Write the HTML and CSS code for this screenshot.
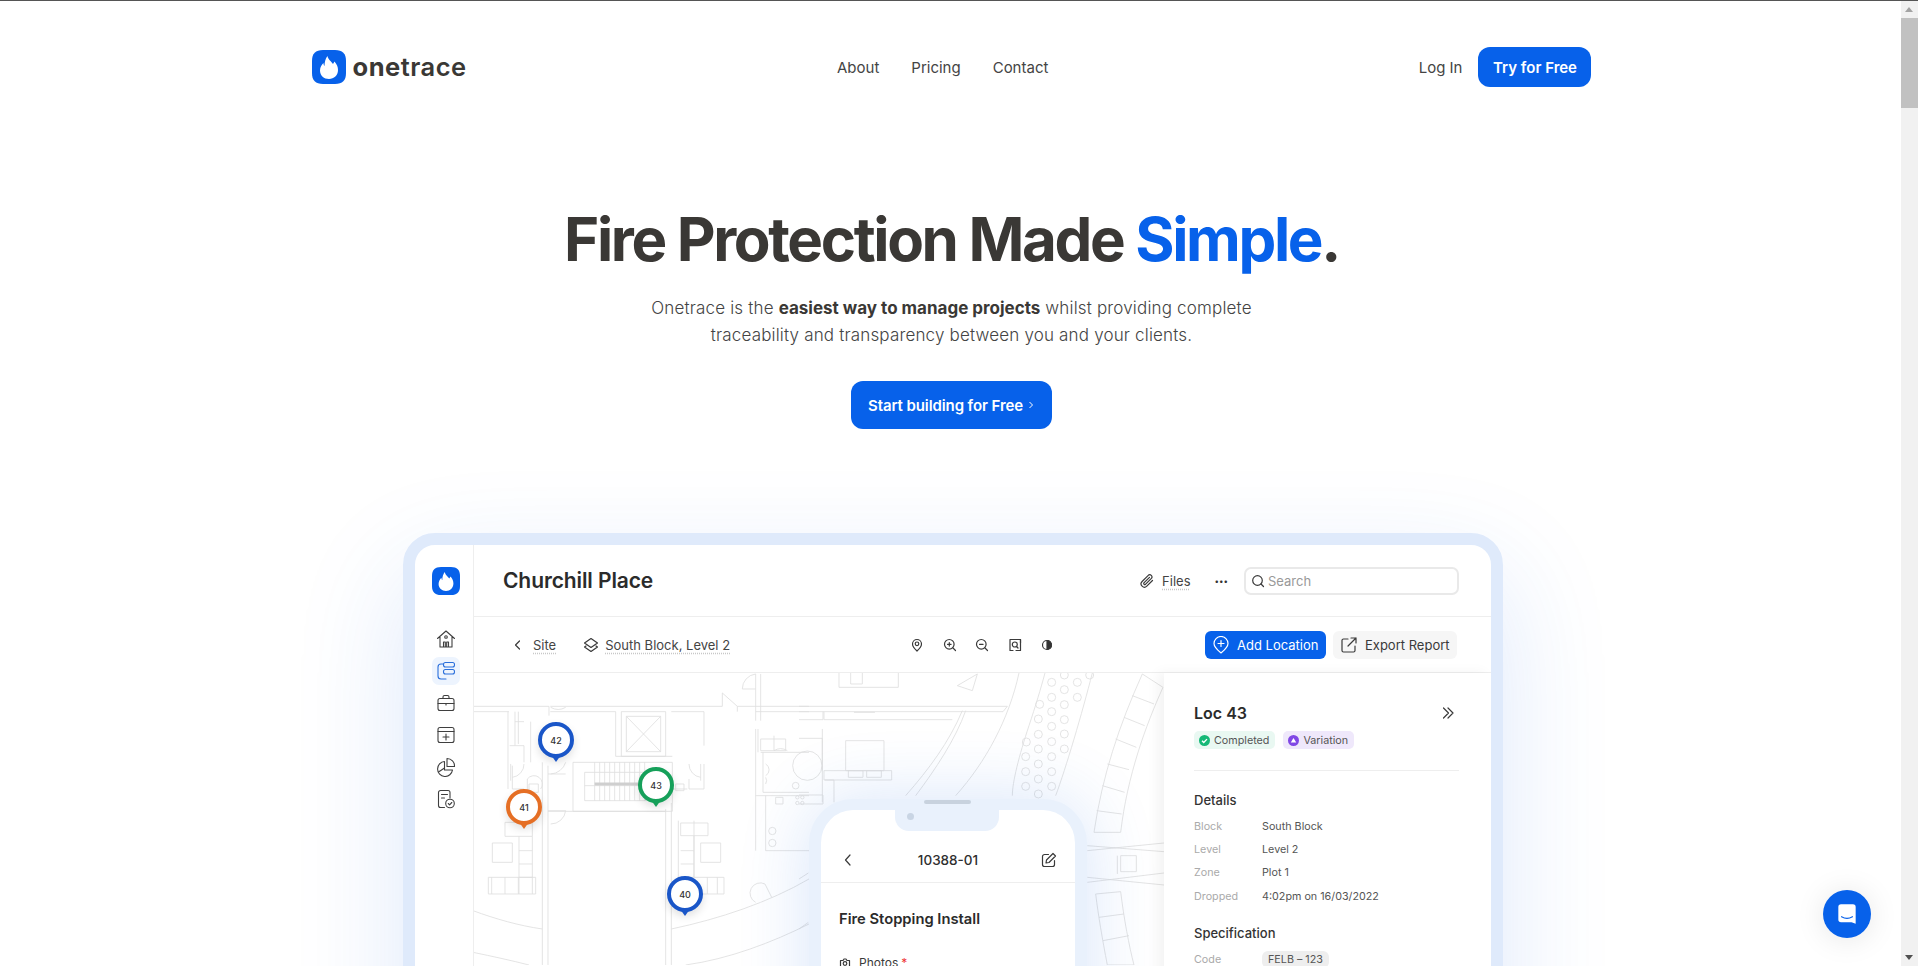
FILE: index.html
```html
<!DOCTYPE html>
<html lang="en">
<head>
<meta charset="utf-8">
<title>Onetrace</title>
<link rel="stylesheet" href="styles.css">
</head>
<body>
<main class="page">
  <header class="site-header">
    <a class="brand">
      <svg class="brand-mark" viewBox="0 0 34 34"><path d="M11 0h12c7.500 0 11 3.500 11 11v12c0 7.500-3.500 11-11 11H11C3.500 34 0 30.500 0 23V11C0 3.500 3.500 0 11 0z" fill="#0761ea"/><path d="M15.500 6c.5 3.500 3.500 5 5.500 8l1.500-2.500c2.500 3 3.500 5.500 3.500 8.500 0 5.500-4 9-9 9s-9-3.500-9-8.500c0-3.500 2-6 3.500-7.500 0 1.500.5 2.500 1 3 0-4 1-7.500 3-10z" fill="#fff"/></svg>
      <span class="wordmark"><b>one</b>trace</span>
    </a>
    <nav class="site-nav"><a>About</a><a>Pricing</a><a>Contact</a></nav>
    <div class="site-actions"><a>Log In</a><a class="btn-primary btn-small">Try for Free</a></div>
  </header>

  <section class="hero">
    <h1>Fire Protection Made <span>Simple</span>.</h1>
    <p>Onetrace is the <strong>easiest way to manage projects</strong> whilst providing complete<br>traceability and transparency between you and your clients.</p>
    <a class="btn-primary btn-large">Start building for Free <svg class="cta-chevron" viewBox="0 0 8 10"><path d="M2.500 2l3 3-3 3" fill="none" stroke="#fff" stroke-width="1"/></svg></a>
  </section>

  <section class="device">
    <aside class="rail">
      <svg class="rail-logo" viewBox="0 0 34 34"><path d="M11 0h12c7.500 0 11 3.500 11 11v12c0 7.500-3.500 11-11 11H11C3.500 34 0 30.500 0 23V11C0 3.500 3.500 0 11 0z" fill="#0761ea"/><path d="M15.500 6c.5 3.500 3.500 5 5.500 8l1.500-2.500c2.500 3 3.500 5.500 3.500 8.500 0 5.500-4 9-9 9s-9-3.500-9-8.500c0-3.500 2-6 3.500-7.500 0 1.500.5 2.500 1 3 0-4 1-7.500 3-10z" fill="#fff"/></svg>
      <div class="rail-icons">
        <span class="rail-icon"><svg viewBox="0 0 20 20"><path d="M1.500 9.500L10 2l8.500 7.500M4 8v10h12V8M7.500 18v-5h1.800v5M10.700 18v-5h1.800v5"/><circle cx="10" cy="8" r="1.300"/></svg></span>
        <span class="rail-icon is-active"><svg viewBox="0 0 20 20"><path d="M7.500 3H5A3 3 0 0 0 2 6v9a3 3 0 0 0 3 3h5"/><rect x="7.500" y="1.500" width="11" height="4.500" rx="2"/><rect x="7.500" y="8.500" width="11" height="4.500" rx="2"/></svg></span>
        <span class="rail-icon"><svg viewBox="0 0 20 20"><rect x="2" y="5.500" width="16" height="12" rx="2"/><path d="M7 5.500V4a1.500 1.500 0 0 1 1.500-1.500h3A1.500 1.500 0 0 1 13 4v1.500M2 10.500h16M10 10.500v1.500"/></svg></span>
        <span class="rail-icon"><svg viewBox="0 0 20 20"><rect x="2" y="2.500" width="16" height="15" rx="2"/><path d="M2 6.500h16M10 9v6M7 12h6"/></svg></span>
        <span class="rail-icon"><svg viewBox="0 0 20 20"><path d="M8.500 4.500A7.500 7.500 0 1 0 16.500 13H8.500z"/><path d="M11 1.500a7.500 7.500 0 0 1 7.500 8H11zM2.500 15L8.500 11"/></svg></span>
        <span class="rail-icon"><svg viewBox="0 0 20 20"><path d="M8.500 18.500H4.500a2 2 0 0 1-2-2V3.500a2 2 0 0 1 2-2H12a2 2 0 0 1 2 2V9M5.500 5.500h6M5.500 9h3"/><circle cx="14" cy="14.500" r="4.300"/><path d="M12.300 14.500l1.300 1.300 2.200-2.300"/></svg></span>
      </div>
    </aside>
    <div class="app">
      <div class="appbar">
        <h2>Churchill Place</h2>
        <div class="appbar-tools">
          <span class="tool-link"><svg class="icon-16" viewBox="0 0 16 16"><path d="M13.500 7.500l-5.700 5.700a3.300 3.300 0 0 1-4.700-4.700L9.300 2.300a2.200 2.200 0 0 1 3.100 3.100l-6 6a1.100 1.100 0 0 1-1.500-1.500L10.500 4.300"/></svg><u>Files</u></span>
          <span class="dots">•••</span>
          <label class="search"><svg class="icon-14" viewBox="0 0 14 14"><circle cx="6.500" cy="6.500" r="4.800"/><path d="M10 10l2.500 2.500"/></svg>Search</label>
        </div>
      </div>
      <div class="toolbar">
        <div class="crumbs">
          <svg class="icon-12" viewBox="0 0 12 12"><path d="M7.500 2L3.500 6l4 4"/></svg><u class="crumb-site">Site</u>
          <svg class="icon-16 crumb-layers" viewBox="0 0 16 16"><path d="M8 1.500L14.500 6 8 10.500 1.500 6z"/><path d="M3 9L1.500 10 8 14.500 14.500 10 13 9"/></svg><u>South Block, Level 2</u>
        </div>
        <div class="map-tools">
          <svg class="icon-14" viewBox="0 0 14 14"><path d="M7 13c-2.500-2.300-4.500-4.500-4.500-7a4.500 4.500 0 0 1 9 0c0 2.500-2 4.700-4.500 7z"/><circle cx="7" cy="5.800" r="1.800"/></svg>
          <svg class="icon-14" viewBox="0 0 14 14"><circle cx="6.300" cy="6.300" r="4.800"/><path d="M10 10l2.500 2.500M4.500 6.300h3.600M6.300 4.500v3.600"/></svg>
          <svg class="icon-14" viewBox="0 0 14 14"><circle cx="6.300" cy="6.300" r="4.800"/><path d="M10 10l2.500 2.500M4.500 6.300h3.600"/></svg>
          <svg class="icon-14" viewBox="0 0 14 14"><path d="M5 12.500H2V1.500h10.500V5"/><path d="M9 1.500h3.500v11H8"/><circle cx="6.800" cy="6.500" r="2.500"/><path d="M8.500 8.500l1.500 1.500"/></svg>
          <svg class="icon-14" viewBox="0 0 14 14"><circle cx="7" cy="7" r="4.500"/><path d="M7 2.500a4.500 4.500 0 0 1 0 9z" fill="#333"/></svg>
        </div>
        <div class="toolbar-actions">
          <a class="btn-add"><svg class="icon-18" viewBox="0 0 18 18"><path d="M9 17c-3.500-3-7-5.800-7-9.500a7 7 0 0 1 14 0c0 3.700-3.500 6.500-7 9.500zM9 4.500v6M6 7.500h6"/></svg>Add Location</a>
          <a class="btn-export"><svg class="icon-18" viewBox="0 0 18 18"><path d="M8 3H3.500A1.500 1.500 0 0 0 2 4.500v10A1.500 1.500 0 0 0 3.500 16h10a1.500 1.500 0 0 0 1.500-1.500V10M11 2h5v5M16 2L8 10"/></svg>Export Report</a>
        </div>
      </div>
      <div class="workspace">
        <div class="map">
          <svg class="plan" viewBox="475 674 690 292" aria-hidden="true">
            <g transform="translate(410 620) scale(.33333)">
              <path d="M192 262H420M192 278H300M420 262V290M424 262H940V222M424 278H620V412M637 278H770V412H637zM652 292H755V398H652zM652 292L755 398M755 292L652 398M620 412H790M787 278H885V380M940 222L985 262V278M985 262H1200M1040 278H1200M1040 165V305M1055 165V305M1000 210H1040M1000 210A45 45 0 0 1 1040 165M297 278V510M318 278V380M328 278V375M302 380H345V430M345 308H318M365 308V430M400 430V1038M417 440V1038M770 570V1038M787 552V1038M492 430H790V577H492zM527 460H710V545H527zM417 577H770M417 465H470M470 430A50 50 0 0 1 425 465M417 575H470M425 615A45 45 0 0 0 470 575M425 265A45 45 0 0 0 470 265"/>
              <path d="M557 430V545M572 430V545M587 430V545M602 430V545M617 430V545M632 430V545M647 430V545M662 430V545M677 430V545M692 430V545M707 430V545M527 500H690"/>
              <path d="M557 495H690" class="plan-bar"/>
              <path d="M288 610H370V652H288zM250 672H310V730H250zM330 652V825M370 652V825M330 695H370M330 735H370M330 775H370M238 775H380V825H238zM248 775V825M288 775V825M328 775V825"/>
              <path d="M808 605V825M855 605V775M815 612H897V650H815zM875 672H935V730H875zM855 650V775M815 695H855M815 735H855M815 775H945V825H815zM895 775V825M925 775V825"/>
              <path d="M310 440V510M305 435V485M310 510H345M345 435A40 40 0 0 1 310 475M355 510V480A20 20 0 0 1 395 510M360 495H388V520H360z"/>
              <path d="M885 435V510M875 435V485M840 510H885M840 435A40 40 0 0 0 875 475M790 510H835M800 495H825V515H800zM840 510V480"/>
              <path d="M192 875C260 900 330 920 400 930M192 1000C250 1012 310 1025 360 1038M787 930C930 900 1080 850 1200 780M830 1038C960 1020 1090 970 1200 915M1040 850A25 25 0 0 1 1068 795L1088 835"/>
              <path d="M1040 330V695M1047 330V400M1055 360H1130V395H1055zM1095 350V395A38 38 0 0 1 1135 395M1055 400H1200M1062 400V520H1200M1040 530H1200M1070 530V695H1200"/>
              <path d="M1100 535H1122V555H1100z"/>
              <circle cx="1090" cy="636" r="11"/><circle cx="1090" cy="672" r="11"/><circle cx="1160" cy="500" r="10"/><circle cx="1195" cy="440" r="44"/><circle cx="1165" cy="535" r="5"/><circle cx="1180" cy="535" r="5"/><circle cx="1165" cy="552" r="5"/><circle cx="1180" cy="552" r="5"/>
              <path d="M1070 435A20 20 0 0 1 1070 470M1070 475A20 20 0 0 1 1070 495"/>
            </g>
            <g transform="translate(800 670) scale(.33333)">
              <path d="M120 10V55H298V10M155 10V45H190V10M0 112H625L612 128H0M75 128V152H460M0 152H72V128M165 130H228"/>
              <path d="M140 215H255V305H140zM75 305H278V333H75zM148 305H192V325H148zM203 305H247V325H203zM0 208H70V305M70 180V400M0 378H72V405H0M78 333H105V400"/>
              <path d="M320 380C390 300 450 220 490 125M350 380C410 300 470 210 500 125M470 380C560 280 630 150 660 12M475 50L535 15L520 65zM640 380C640 340 660 260 690 170C710 110 725 60 738 12M770 380C800 300 850 130 880 12"/>
              <circle cx="680" cy="352" r="12"/><circle cx="680" cy="308" r="12"/><circle cx="680" cy="263" r="12"/><circle cx="682" cy="219" r="12"/><circle cx="718" cy="375" r="12"/><circle cx="718" cy="330" r="12"/><circle cx="718" cy="285" r="12"/><circle cx="718" cy="240" r="12"/><circle cx="718" cy="196" r="12"/><circle cx="718" cy="150" r="12"/><circle cx="722" cy="106" r="12"/><circle cx="758" cy="352" r="12"/><circle cx="758" cy="308" r="12"/><circle cx="758" cy="263" r="12"/><circle cx="758" cy="218" r="12"/><circle cx="758" cy="172" r="12"/><circle cx="758" cy="128" r="12"/><circle cx="758" cy="85" r="12"/><circle cx="758" cy="40" r="12"/><circle cx="796" cy="240" r="12"/><circle cx="796" cy="195" r="12"/><circle cx="796" cy="152" r="12"/><circle cx="796" cy="107" r="12"/><circle cx="796" cy="62" r="12"/><circle cx="796" cy="18" r="12"/><circle cx="835" cy="85" r="12"/><circle cx="835" cy="40" r="12"/><circle cx="872" cy="18" r="12"/>
              <path d="M1030 15C960 170 910 320 885 490H965C985 320 1040 170 1092 55zM1000 80L1065 105M975 145L1037 170M950 210L1012 235M925 285L990 302M910 350L977 370M893 425L968 435"/>
              <path d="M865 530L1095 548M865 545L1095 522M865 640L1095 612M865 625L1095 648M955 560V615M965 560H1012V608H965z"/>
              <path d="M890 675L965 668C975 750 990 830 1005 888H925C910 810 898 740 890 675zM900 745L975 735M912 815L990 800"/>
              <path d="M0 630L28 612M0 780L28 760"/>
            </g>
          </svg>
          <span class="pin pin-blue pin-42">42</span>
          <span class="pin pin-green pin-43">43</span>
          <span class="pin pin-orange pin-41">41</span>
          <span class="pin pin-blue pin-40">40</span>
          <div class="phone">
            <div class="phone-notch"><i class="phone-speaker"></i><i class="phone-camera"></i></div>
            <div class="phone-head">
              <svg class="icon-14" viewBox="0 0 14 14"><path d="M9 2L4.500 7 9 12"/></svg>
              <span>10388-01</span>
              <svg class="icon-16" viewBox="0 0 16 16"><path d="M7.500 2.500H3.500A2 2 0 0 0 1.500 4.500v8a2 2 0 0 0 2 2h8a2 2 0 0 0 2-2V8.500M12 1.500l2.500 2.500L8 10.500l-3 .5.500-3z"/></svg>
            </div>
            <div class="phone-body">
              <h3>Fire Stopping Install</h3>
              <div class="phone-field"><svg class="icon-12" viewBox="0 0 12 12"><path d="M1.500 3.500H4L5 2h2l1 1.500h2.500v7h-9z"/><circle cx="6" cy="6.500" r="1.800"/></svg>Photos <em>*</em></div>
            </div>
          </div>
        </div>
        <aside class="panel">
          <div class="panel-head">
            <strong>Loc 43</strong>
            <svg class="icon-14" viewBox="0 0 14 14"><path d="M2.500 2L7.500 7l-5 5M7 2l5 5-5 5"/></svg>
          </div>
          <div class="chips">
            <span class="chip chip-green"><svg viewBox="0 0 12 12"><circle cx="6" cy="6" r="6" fill="#16b877"/><path d="M3.300 6.200l1.900 1.900 3.500-3.600" fill="none" stroke="#fff" stroke-width="1.500"/></svg>Completed</span>
            <span class="chip chip-purple"><svg viewBox="0 0 12 12"><circle cx="6" cy="6" r="6" fill="#8047e5"/><path d="M6 3.300L9 8.200H3z" fill="#fff"/></svg>Variation</span>
          </div>
          <hr>
          <h4>Details</h4>
          <dl>
            <dt>Block</dt><dd>South Block</dd>
            <dt>Level</dt><dd>Level 2</dd>
            <dt>Zone</dt><dd>Plot 1</dd>
            <dt>Dropped</dt><dd>4:02pm on 16/03/2022</dd>
          </dl>
          <h4 class="spec-title">Specification</h4>
          <dl class="spec">
            <dt>Code</dt><dd><span class="code">FELB – 123</span></dd>
          </dl>
        </aside>
      </div>
    </div>
  </section>
</main>
<aside class="scrollbar" aria-hidden="true">
  <i class="arrow-up"></i><i class="thumb"></i><i class="track"></i><i class="arrow-down"></i>
</aside>
<a class="chat"><svg viewBox="0 0 24 24"><path d="M4 5.500A2.500 2.500 0 0 1 6.500 3h11A2.500 2.500 0 0 1 20 5.500V21l-3.800-1.500H6.500A2.500 2.500 0 0 1 4 17z" fill="#fff"/><path d="M7 14.500c3 1.800 7 1.800 10 0" fill="none" stroke="#0761ea" stroke-width="1.100" stroke-linecap="round"/></svg></a>
</body>
</html>
```

FILE: styles.css
```css
* { box-sizing: border-box; }
html, body { height: 100%; margin: 0; overflow: hidden; }
body {
  display: flex;
  border-top: 1px solid #555;
  background: #fff;
  color: #3a3835;
  font-family: Inter, "Liberation Sans", sans-serif;
}
u { text-decoration: underline dotted #c8c8c8; text-underline-offset: 3px; }
svg { flex: none; display: block; }

.page { flex: 1; min-width: 0; overflow: hidden; padding-left: 2px; }
.scrollbar { width: 17px; flex: none; display: flex; flex-direction: column; background: #f1f1f1; }
.arrow-up, .arrow-down { height: 17px; position: relative; }
.arrow-up::after, .arrow-down::after {
  content: ""; position: absolute; left: 4px; top: 6px;
  border-left: 4px solid transparent; border-right: 4px solid transparent;
}
.arrow-up::after { border-bottom: 5px solid #a3a3a3; }
.arrow-down::after { border-top: 5px solid #505050; }
.thumb { height: 90px; background: #c1c1c1; }
.track { flex: 1; }

.site-header {
  width: 1280px; margin: 0 auto; padding-top: 46px;
  display: flex; align-items: center; justify-content: space-between;
  font-size: 15px; color: #444;
}
.brand { display: flex; align-items: center; gap: 7px; }
.brand-mark { width: 34px; height: 34px; }
.wordmark { font-size: 25.500px; font-weight: 600; color: #3a3835; letter-spacing: .5px; line-height: 34px; }
.wordmark b { font-weight: 700; }
.site-nav { display: flex; gap: 32px; }
.site-actions { display: flex; align-items: center; gap: 16px; }

.btn-primary { background: #0761ea; color: #fff; font-weight: 600; display: flex; align-items: center; justify-content: center; }
.btn-small { width: 113px; height: 40px; border-radius: 12px; font-size: 15px; }
.btn-large { width: 201px; height: 48px; border-radius: 12px; font-size: 15px; letter-spacing: -.1px; gap: 4px; margin: 0 auto; }
.cta-chevron { width: 8px; height: 10px; }

.hero { text-align: center; padding-top: 116px; }
.hero h1 { margin: 0; font-size: 60px; line-height: 72px; font-weight: 700; letter-spacing: -2.350px; color: #3a3835; }
.hero h1 span { color: #0761ea; }
.hero p { margin: 20px 0 0; font-size: 17px; line-height: 27px; font-weight: 300; letter-spacing: .17px; color: #444; }
.hero p strong { font-weight: 700; color: #3a3835; letter-spacing: 0; }
.hero .btn-large { margin-top: 32px; }

.device {
  margin: 104px 0 0 401px; width: 1100px; height: 800px;
  display: flex; background: #fff;
  border: 12px solid #dfeafb; border-radius: 32px;
  box-shadow: 0 40px 110px rgba(40, 110, 230, .15);
  overflow: hidden;
}
.rail { width: 59px; flex: none; border-right: 1px solid #eee; display: flex; flex-direction: column; align-items: center; padding: 22px 0 0 3px; }
.rail-logo { width: 28px; height: 28px; }
.rail-icons { margin-top: 30px; display: flex; flex-direction: column; gap: 4px; }
.rail-icon { width: 28px; height: 28px; display: flex; align-items: center; justify-content: center; border-radius: 7px; }
.rail-icon svg { width: 20px; height: 20px; fill: none; stroke: #3f3f3f; stroke-width: 1.100; stroke-linejoin: round; stroke-linecap: round; }
.rail-icon.is-active { background: #edf4fe; }
.rail-icon.is-active svg { stroke: #2a6fdb; }

.icon-12, .icon-14, .icon-16, .icon-18 { fill: none; stroke: #3a3a3a; stroke-width: 1.200; stroke-linecap: round; stroke-linejoin: round; }
.icon-12 { width: 12px; height: 12px; }
.icon-14 { width: 14px; height: 14px; }
.icon-16 { width: 16px; height: 16px; }
.icon-18 { width: 18px; height: 18px; }

.app { flex: 1; min-width: 0; display: flex; flex-direction: column; }
.appbar { height: 72px; flex: none; display: flex; align-items: center; justify-content: space-between; padding: 0 32px 0 29px; border-bottom: 1px solid #eee; }
.appbar h2 { margin: 0; font-size: 21px; font-weight: 600; letter-spacing: -.1px; color: #2b2b2b; }
.appbar-tools { display: flex; align-items: center; font-size: 13px; color: #444; }
.tool-link { display: flex; align-items: center; gap: 7px; }
.dots { font-size: 8px; letter-spacing: 0; margin: 0 16px 0 24px; color: #333; }
.search { width: 215px; height: 28px; border: 2px solid #e9e9e9; border-radius: 7px; display: flex; align-items: center; gap: 3px; padding-left: 5px; color: #999; }

.toolbar { height: 56px; flex: none; display: flex; align-items: center; padding: 0 32px 0 38px; border-bottom: 1px solid #eee; font-size: 13px; color: #444; }
.crumbs { display: flex; align-items: center; width: 398px; }
.crumb-site { margin-left: 9px; }
.crumb-layers { margin: 0 6px 0 27px; }
.map-tools { display: flex; gap: 18.500px; width: 295px; }
.toolbar-actions { display: flex; gap: 7px; }
.btn-add, .btn-export { height: 28px; border-radius: 6px; display: flex; align-items: center; gap: 7px; }
.btn-add { width: 121px; background: #0761ea; color: #fff; padding-left: 7px; }
.btn-add .icon-18 { stroke: #fff; }
.btn-export { width: 124px; background: #f6f6f6; padding-left: 7px; color: #3a3a3a; }

.workspace { flex: 1; display: flex; min-height: 0; }
.map { width: 690px; flex: none; position: relative; overflow: hidden; }
.plan { display: block; width: 690px; height: 292px; fill: none; stroke: #dedede; stroke-width: 2.500; }
.plan-bar { stroke: #cfcfcf; stroke-width: 9; }

.pin {
  position: absolute; width: 36px; height: 36px; border-radius: 50%;
  border: 4px solid; background: #fff;
  display: flex; align-items: center; justify-content: center;
  font-size: 9px; font-weight: 500; color: #333;
  box-shadow: 0 4px 8px rgba(0, 0, 0, .12);
}
.pin::after {
  content: ""; position: absolute; left: 9px; top: 29px;
  border-left: 5px solid transparent; border-right: 5px solid transparent; border-top: 7px solid;
  border-top-color: inherit;
}
.pin-blue { border-color: #1a56c8; }
.pin-green { border-color: #16a05a; }
.pin-orange { border-color: #e56f25; }
.pin-42 { left: 64px; top: 49px; }
.pin-43 { left: 164px; top: 94px; }
.pin-41 { left: 32px; top: 116px; }
.pin-40 { left: 193px; top: 203px; }

.phone {
  position: absolute; left: 335px; top: 126px; width: 278px; height: 400px;
  border: 12px solid #e9f1fc; border-top-width: 11px; border-radius: 44px;
  background: #fff; box-shadow: 0 0 70px rgba(40, 110, 230, .18);
}
.phone-notch { position: absolute; left: 74px; top: -1px; width: 104px; height: 22px; background: #e9f1fc; border-radius: 0 0 14px 14px; }
.phone-speaker { position: absolute; left: 29px; top: -9px; width: 47px; height: 4px; border-radius: 2px; background: #c8d2de; }
.phone-camera { position: absolute; left: 12px; top: 4px; width: 7px; height: 7px; border-radius: 50%; background: #c9d5e4; }
.phone-head { margin-top: 28px; height: 45px; display: flex; align-items: center; justify-content: space-between; padding: 0 18px 0 20px; border-bottom: 1px solid #eee; font-size: 13.500px; font-weight: 500; color: #2f2f2f; }
.phone-body { padding: 26px 18px; }
.phone-body h3 { margin: 0; font-size: 14.750px; line-height: 20px; font-weight: 600; color: #2b2b2b; }
.phone-field { margin-top: 26px; display: flex; align-items: center; gap: 8px; font-size: 12px; color: #3a3a3a; }
.phone-field em { color: #e33; font-style: normal; margin-left: -5px; }

.panel { flex: 1; min-width: 0; padding: 29px 32px 0 30px; background: #fff; box-shadow: -6px 0 12px rgba(0, 0, 0, .05); position: relative; font-size: 12px; color: #555; }
.panel-head { display: flex; align-items: center; justify-content: space-between; padding-right: 4px; }
.panel-head strong { font-size: 16px; line-height: 22px; font-weight: 600; color: #2b2b2b; }
.chips { display: flex; gap: 8px; margin-top: 7px; }
.chip { height: 18px; display: flex; align-items: center; gap: 4px; padding: 0 6px 0 5px; border-radius: 5px; font-size: 10.750px; color: #555; }
.chip svg { width: 11px; height: 11px; }
.chip-green { background: #e9f8f2; }
.chip-purple { background: #efe8fb; }
.panel hr { border: 0; border-top: 1px solid #eee; margin: 21px 0 20px; }
.panel h4 { margin: 0; font-size: 13px; line-height: 18px; font-weight: 500; color: #333; }
.panel dl { margin: 6px 0 0; display: grid; grid-template-columns: 68px 1fr; grid-auto-rows: 23.200px; align-items: center; }
.panel dt { color: #aaa; font-size: 10.750px; }
.panel dd { margin: 0; font-size: 10.750px; color: #555; }
.panel h4.spec-title { margin-top: 16px; }
.panel dl.spec { margin-top: 6px; }
.code { display: inline-block; background: #eee; border-radius: 6px; padding: 2px 6px; }

.chat {
  position: fixed; right: 47px; bottom: 28px; width: 48px; height: 48px;
  border-radius: 50%; background: #0761ea;
  display: flex; align-items: center; justify-content: center;
  box-shadow: 0 2px 30px rgba(0, 0, 0, .1);
}
.chat svg { width: 26px; height: 26px; }
```
